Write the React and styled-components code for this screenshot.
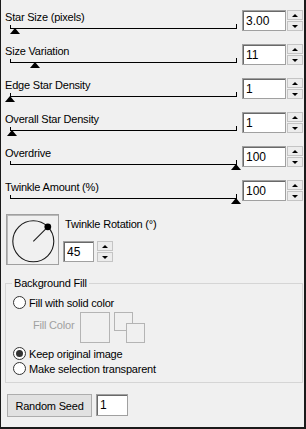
import React from 'react';
import styled, { createGlobalStyle } from 'styled-components';

const sliders = [
  { label: 'Star Size (pixels)', value: '3.00', pos: 0.022 },
  { label: 'Size Variation', value: '11', pos: 0.11 },
  { label: 'Edge Star Density', value: '1', pos: 0 },
  { label: 'Overall Star Density', value: '1', pos: 0.009 },
  { label: 'Overdrive', value: '100', pos: 1 },
  { label: 'Twinkle Amount (%)', value: '100', pos: 1 },
];

const TRACK = 226;

const Spinner = () => (
  <Spin>
    <SpinButton><Arrow /></SpinButton>
    <SpinButton><Arrow $down /></SpinButton>
  </Spin>
);

const Radio = ({ checked, children }) => (
  <RadioRow>
    <RadioCircle $checked={checked} />
    <span>{children}</span>
  </RadioRow>
);

const App = () => (
  <>
    <GlobalStyle />
    <Panel>
      {sliders.map(s => (
        <SliderRow key={s.label}>
          <SliderPart>
            <Label>{s.label}</Label>
            <Track>
              <Thumb style={{ left: `${Math.round(s.pos * TRACK) - 5}px` }} />
            </Track>
          </SliderPart>
          <FieldGroup>
            <ValueInput $w={44} readOnly value={s.value} />
            <Spinner />
          </FieldGroup>
        </SliderRow>
      ))}

      <RotationRow>
        <DialBox>
          <svg width="51" height="49" viewBox="0 0 51 49">
            <circle cx="26.3" cy="26.3" r="20.5" fill="none" stroke="#1a1a1a" strokeWidth="1.1" />
            <line x1="26.3" y1="26.3" x2="40.8" y2="11.8" stroke="#1a1a1a" strokeWidth="1.1" />
            <circle cx="40.8" cy="11.8" r="3.4" fill="#000" />
          </svg>
        </DialBox>
        <RotationControls>
          <RotLabel>Twinkle Rotation (°)</RotLabel>
          <FieldGroup $gap={3} $top={10}>
            <ValueInput $w={31} readOnly value="45" />
            <Spinner />
          </FieldGroup>
        </RotationControls>
      </RotationRow>

      <Group>
        <Legend>Background Fill</Legend>
        <Radio>Fill with solid color</Radio>
        <FillRow>
          <FillLabel>Fill Color</FillLabel>
          <ColorBox />
          <Swatch width="31" height="31" viewBox="0 0 31 31">
            <rect x="0.5" y="0.5" width="18" height="18" fill="none" stroke="#b4b4b4" />
            <rect x="12.5" y="11.5" width="18" height="19" fill="#f0f0f0" stroke="#b4b4b4" />
          </Swatch>
        </FillRow>
        <Radio checked>Keep original image</Radio>
        <Radio>Make selection transparent</Radio>
      </Group>

      <SeedRow>
        <SeedButton>Random Seed</SeedButton>
        <ValueInput $w={32} $h={22} readOnly value="1" />
      </SeedRow>
    </Panel>
  </>
);

const GlobalStyle = createGlobalStyle`
  body {
    margin: 0;
    background: #f0f0f0;
    font-family: "Liberation Sans", Arial, sans-serif;
  }
`;

const Panel = styled.div`
  width: 306px;
  height: 429px;
  box-sizing: border-box;
  display: flex;
  flex-direction: column;
  padding-top: 10px;
  background: #f0f0f0;
  border-left: 1px solid #1a1a1a;
  border-right: 2px solid #1a1a1a;
  border-bottom: 2px solid #1a1a1a;
  font-size: 11px;
  letter-spacing: -0.2px;
  color: #000;
`;

const SliderRow = styled.div`
  display: flex;
  height: 34px;
  flex-shrink: 0;
`;

const SliderPart = styled.div`
  width: 241px;
  display: flex;
  flex-direction: column;
`;

const Label = styled.div`
  margin-left: 4px;
  height: 14px;
  line-height: 14px;
  white-space: nowrap;
`;

const Track = styled.div`
  position: relative;
  margin: 0 5px 0 9px;
  height: 4px;
  border-bottom: 1px solid #000;

  &::before,
  &::after {
    content: '';
    position: absolute;
    width: 1px;
    background: #000;
  }
  &::before {
    left: 0;
    top: 1px;
    height: 3px;
  }
  &::after {
    right: 0;
    top: 0;
    height: 4px;
  }
`;

const Thumb = styled.div`
  position: absolute;
  top: 4px;
  width: 0;
  height: 0;
  border-left: 5px solid transparent;
  border-right: 5px solid transparent;
  border-bottom: 6px solid #000;
`;

const FieldGroup = styled.div`
  display: flex;
  gap: ${p => p.$gap || 1}px;
  margin-top: ${p => p.$top || 0}px;
`;

const ValueInput = styled.input`
  width: ${p => p.$w}px;
  height: ${p => p.$h || 21}px;
  box-sizing: border-box;
  margin: 0;
  padding: 0 0 0 3px;
  border: 1px solid #a0a0a0;
  box-shadow: inset 1px 1px 0 #696969;
  background: #fff;
  outline: none;
  font-family: "Liberation Sans", Arial, sans-serif;
  font-size: 12px;
  color: #000;
`;

const Spin = styled.div`
  display: flex;
  flex-direction: column;
  gap: 1px;
  width: 16px;
  height: 21px;
`;

const SpinButton = styled.div`
  flex: 1;
  box-sizing: border-box;
  display: flex;
  align-items: center;
  justify-content: center;
  border: 1px solid #c4c4c4;
  background: #ececec;
`;

const Arrow = styled.div`
  width: 0;
  height: 0;
  border-left: 3px solid transparent;
  border-right: 3px solid transparent;
  ${p => (p.$down ? 'border-top: 3px solid #000;' : 'border-bottom: 3px solid #000;')}
`;

const RotationRow = styled.div`
  display: flex;
  padding-left: 5px;
`;

const DialBox = styled.div`
  width: 53px;
  height: 51px;
  box-sizing: border-box;
  border: 1px solid #a0a0a0;
  box-shadow: inset 1px 1px 0 #b9b9b9;

  svg {
    display: block;
  }
`;

const RotationControls = styled.div`
  display: flex;
  flex-direction: column;
  margin-left: 4px;
  padding-top: 3px;
`;

const RotLabel = styled.div`
  padding-left: 2px;
  line-height: 14px;
  white-space: nowrap;
`;

const Group = styled.fieldset`
  margin: 11px 1px 0 4px;
  padding: 0 0 6px 0;
  border: 1px solid #d5d5d5;
  min-width: 0;
`;

const Legend = styled.legend`
  margin-left: 6px;
  padding: 0 2px;
  line-height: 14px;
`;

const RadioRow = styled.div`
  display: flex;
  align-items: center;
  gap: 3px;
  height: 15px;
  padding-left: 7px;
  white-space: nowrap;

  &:first-of-type {
    margin-top: 5px;
  }
`;

const RadioCircle = styled.span`
  width: 13px;
  height: 13px;
  box-sizing: border-box;
  display: flex;
  align-items: center;
  justify-content: center;
  border: 1px solid #333;
  border-radius: 50%;
  background: #fff;

  &::after {
    content: '';
    display: ${p => (p.$checked ? 'block' : 'none')};
    width: 7px;
    height: 7px;
    border-radius: 50%;
    background: #333;
  }
`;

const FillRow = styled.div`
  display: flex;
  align-items: flex-start;
  height: 31px;
  margin: 2px 0 3px;
  padding-left: 27px;
`;

const FillLabel = styled.span`
  margin-top: 6px;
  line-height: 14px;
  color: #a0a0a0;
`;

const ColorBox = styled.div`
  width: 30px;
  height: 31px;
  margin-left: 6px;
  box-sizing: border-box;
  border: 1px solid #b4b4b4;
`;

const Swatch = styled.svg`
  display: block;
  margin-left: 4px;
`;

const SeedRow = styled.div`
  display: flex;
  gap: 4px;
  margin-top: 11px;
  padding-left: 6px;
`;

const SeedButton = styled.button`
  width: 85px;
  height: 23px;
  margin: 0;
  padding: 0;
  border: 1px solid #adadad;
  background: #e1e1e1;
  font-family: inherit;
  font-size: 11px;
  letter-spacing: -0.2px;
  color: #000;
`;

export default App;
